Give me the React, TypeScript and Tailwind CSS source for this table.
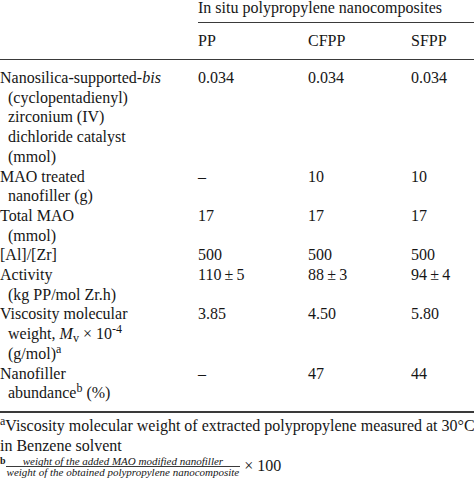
import type { ReactNode } from "react";

type Row = {
  label: ReactNode[];
  values: ReactNode[];
};

const rows: Row[] = [
  {
    label: [
      <>
        Nanosilica-supported-<i>bis</i>
      </>,
      "(cyclopentadienyl)",
      "zirconium (IV)",
      "dichloride catalyst",
      "(mmol)",
    ],
    values: ["0.034", "0.034", "0.034"],
  },
  {
    label: ["MAO treated", "nanofiller (g)"],
    values: ["–", "10", "10"],
  },
  {
    label: ["Total MAO", "(mmol)"],
    values: ["17", "17", "17"],
  },
  {
    label: ["[Al]/[Zr]"],
    values: ["500", "500", "500"],
  },
  {
    label: ["Activity", "(kg PP/mol Zr.h)"],
    values: ["110\u2009±\u20095", "88\u2009±\u20093", "94\u2009±\u20094"],
  },
  {
    label: [
      "Viscosity molecular",
      <>
        weight, <i>M</i>
        <sub>v</sub> × 10<sup>-4</sup>
      </>,
      <>
        (g/mol)<sup>a</sup>
      </>,
    ],
    values: ["3.85", "4.50", "5.80"],
  },
  {
    label: [
      "Nanofiller",
      <>
        abundance<sup>b</sup> (%)
      </>,
    ],
    values: ["–", "47", "44"],
  },
];

const cols = "grid grid-cols-[198px_110px_103px_1fr]";

const App = () => {
  return (
    <div className="w-[474px] h-[478px] overflow-hidden bg-white text-[#161616] text-[16px] leading-[19.7px] font-['Liberation_Serif','Times_New_Roman',serif]">
      {/* header */}
      <div className={cols}>
        <div />
        <div className="col-span-3 -mt-[2px] pb-[4px] border-b border-[#3a3a3a] leading-[20px]">
          In situ polypropylene nanocomposites
        </div>
      </div>
      <div className={`${cols} border-b border-[#3a3a3a] pt-[8px] pb-[8px] leading-[20px]`}>
        <div />
        <div>PP</div>
        <div>CFPP</div>
        <div>SFPP</div>
      </div>

      {/* body */}
      <div className="pt-[8px] pb-[8px] border-b-2 border-[#3a3a3a]">
        {rows.map((row, i) => (
          <div key={i} className={cols}>
            <div>
              {row.label.map((line, j) => (
                <div key={j} className={`whitespace-nowrap ${j > 0 ? "pl-[8px]" : ""}`}>
                  {line}
                </div>
              ))}
            </div>
            {row.values.map((v, j) => (
              <div key={j} className="whitespace-nowrap">
                {v}
              </div>
            ))}
          </div>
        ))}
      </div>

      {/* footnotes */}
      <div className="pt-[3px] leading-[20px] whitespace-nowrap">
        <div>
          <sup>a</sup>Viscosity molecular weight of extracted polypropylene measured at 30°C
        </div>
        <div>in Benzene solvent</div>
        <div className="flex items-center">
          <span className="self-start text-[10px] leading-[9px] font-bold">b</span>
          <span className="flex flex-col items-center italic text-[11px] leading-[10px]">
            <span className="px-[2px]">weight of the added MAO modified nanofiller</span>
            <span className="border-t border-[#3a3a3a] px-[1px]">
              weight of the obtained polypropylene nanocomposite
            </span>
          </span>
          <span className="ml-[4px] leading-[18px]">× 100</span>
        </div>
      </div>
    </div>
  );
};

export default App;
